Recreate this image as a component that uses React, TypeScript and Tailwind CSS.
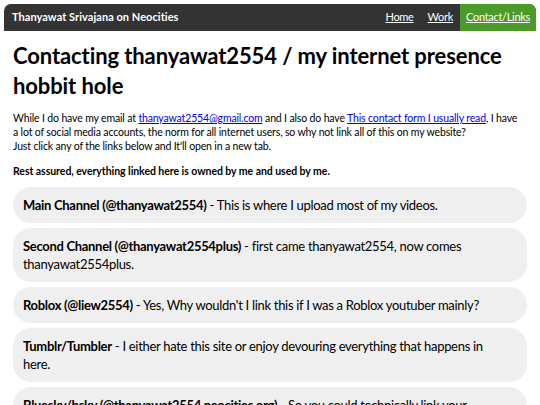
import React from "react";

const items: { title: string; desc: string }[] = [
  { title: "Main Channel (@thanyawat2554)", desc: "This is where I upload most of my videos." },
  { title: "Second Channel (@thanyawat2554plus)", desc: "first came thanyawat2554, now comes thanyawat2554plus." },
  { title: "Roblox (@liew2554)", desc: "Yes, Why wouldn't I link this if I was a Roblox youtuber mainly?" },
  { title: "Tumblr/Tumbler", desc: "I either hate this site or enjoy devouring everything that happens in here." },
  { title: "Bluesky/bsky (@thanyawat2554.neocities.org)", desc: "So you could technically link your account to your own website domain." },
];

export default function App() {
  return (
    <div className="min-h-screen bg-white text-black" style={{ fontFamily: "Lato, 'Noto Sans', sans-serif" }}>
      <div className="px-[4px] pt-[4px]">
        <nav className="flex h-[27px] items-stretch overflow-hidden rounded-t-[7px] bg-[#333333] text-[11px] tracking-[-0.3px]">
          <div className="flex flex-1 items-center pl-[8px] font-bold tracking-[0.05px] text-white">Thanyawat Srivajana on Neocities</div>
          <a className="flex items-center px-[7px] text-white underline">Home</a>
          <a className="flex items-center px-[7px] text-white underline">Work</a>
          <a className="flex items-center bg-[#4c9a2a] px-[6px] text-white underline">Contact/Links</a>
        </nav>
      </div>
      <main className="px-[13px]">
        <h1 className="mt-[10px] text-[22px] font-bold leading-[30px] tracking-[-0.1px]">
          Contacting thanyawat2554 / my internet presence hobbit hole
        </h1>
        <p className="mt-[10px] pr-[8px] text-[10.5px] leading-[14px] tracking-[-0.15px]">
          While I do have my email at <a className="text-[#0000ee] underline">thanyawat2554@gmail.com</a> and I also do have{" "}
          <a className="text-[#0000ee] underline">This contact form I usually read</a>, I have a lot of social media accounts, the norm for all internet users, so why not link all of this on my website?
          <br />
          Just click any of the links below and It'll open in a new tab.
        </p>
        <p className="mt-[11px] text-[10.5px] font-bold leading-[14px] tracking-[-0.05px]">Rest assured, everything linked here is owned by me and used by me.</p>
        <div className="mt-[9px] flex flex-col gap-[5px]">
          {items.map((it) => (
            <div key={it.title} className="rounded-[18px] bg-[#efefef] py-[9px] pl-[10px] pr-[16px] text-[13px] leading-[18px] tracking-[-0.3px]">
              <span className="font-bold">{it.title}</span> - {it.desc}
            </div>
          ))}
        </div>
      </main>
    </div>
  );
}
